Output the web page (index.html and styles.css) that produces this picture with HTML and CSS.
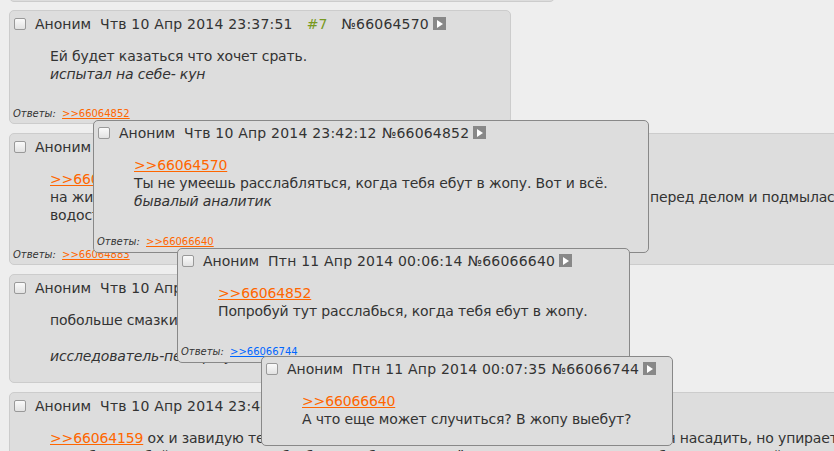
FILE: index.html
```html
<!DOCTYPE html>
<html lang="ru">
<head>
    <meta charset="UTF-8">
    <title>Тред</title>
    <link rel="stylesheet" href="styles.css">
</head>
<body>
    <div class="thread">
        <div class="post post-prev"></div>

        <div class="post post-narrow">
            <div class="post-head">
                <span class="check"></span>
                <span class="name">Аноним</span>
                <span class="date">Чтв 10 Апр 2014 23:37:51</span>
                <span class="num">#7</span>
                <span class="postnum">№66064570</span>
                <span class="play"></span>
            </div>
            <blockquote class="post-body">
                Ей будет казаться что хочет срать.<br>
                <em>испытал на себе- кун</em>
            </blockquote>
            <div class="replies">Ответы: <a href="#">&gt;&gt;66064852</a></div>
        </div>

        <div class="post post-wide">
            <div class="post-head">
                <span class="check"></span>
                <span class="name">Аноним</span>
                <span class="date">Чтв 10 Апр 2014 23:40:05</span>
                <span class="postnum">№66064711</span>
                <span class="play"></span>
            </div>
            <blockquote class="post-body">
                <a href="#">&gt;&gt;66064570</a><br>
                на животе лежать, расслабиться и не дёргаться, а главное чтоб она всё сделала перед делом и подмылась как следует, а то потом будет неловко<br>
                водосточную трубу ещё прочистить, на всякий случай
            </blockquote>
            <div class="replies">Ответы: <a href="#">&gt;&gt;66064883</a></div>
        </div>

        <div class="post post-narrow">
            <div class="post-head">
                <span class="check"></span>
                <span class="name">Аноним</span>
                <span class="date">Чтв 10 Апр 2014 23:41:33</span>
                <span class="postnum">№66064790</span>
                <span class="play"></span>
            </div>
            <blockquote class="post-body">
                побольше смазки и не торопиться<br>
                <br>
                <em>исследователь-пещер-кун</em>
            </blockquote>
        </div>

        <div class="post post-wide">
            <div class="post-head">
                <span class="check"></span>
                <span class="name">Аноним</span>
                <span class="date">Чтв 10 Апр 2014 23:44:18</span>
                <span class="postnum">№66064901</span>
                <span class="play"></span>
            </div>
            <blockquote class="post-body">
                <a href="#">&gt;&gt;66064159</a> ох и завидую тебе, анончик, я бы тоже хотел её так вот взять и на член насадить, но упирается всё в то, что тянки нет<br>
                а вообще не бойся, главное чтобы было не больно, и всё у вас получится, удачи тебе, анон, и твоей тянке
            </blockquote>
        </div>
    </div>

    <!-- превью постов при наведении на ссылки -->
    <div class="post preview preview-a">
        <div class="post-head">
            <span class="check"></span>
            <span class="name">Аноним</span>
            <span class="date">Чтв 10 Апр 2014 23:42:12</span>
            <span class="postnum">№66064852</span>
            <span class="play"></span>
        </div>
        <blockquote class="post-body">
            <a href="#">&gt;&gt;66064570</a><br>
            Ты не умеешь расслабляться, когда тебя ебут в жопу. Вот и всё.<br>
            <em>бывалый аналитик</em>
        </blockquote>
        <div class="replies">Ответы: <a href="#">&gt;&gt;66066640</a></div>
    </div>

    <div class="post preview preview-b">
        <div class="post-head">
            <span class="check"></span>
            <span class="name">Аноним</span>
            <span class="date">Птн 11 Апр 2014 00:06:14</span>
            <span class="postnum">№66066640</span>
            <span class="play"></span>
        </div>
        <blockquote class="post-body">
            <a href="#">&gt;&gt;66064852</a><br>
            Попробуй тут расслабься, когда тебя ебут в жопу.
        </blockquote>
        <div class="replies">Ответы: <a href="#" class="hover">&gt;&gt;66066744</a></div>
    </div>

    <div class="post preview preview-c">
        <div class="post-head">
            <span class="check"></span>
            <span class="name">Аноним</span>
            <span class="date">Птн 11 Апр 2014 00:07:35</span>
            <span class="postnum">№66066744</span>
            <span class="play"></span>
        </div>
        <blockquote class="post-body">
            <a href="#">&gt;&gt;66066640</a><br>
            А что еще может случиться? В жопу выебут?
        </blockquote>
    </div>
</body>
</html>
```

FILE: styles.css
```css
body {
    font-family: "DejaVu Sans", Verdana, sans-serif;
    font-size: 14px;
    color: #333;
    background-color: #eee;
    margin: 0;
    padding: 0;
    overflow: hidden;
}
a {
    color: #ff6600;
}
.thread {
    padding-left: 9px;
}
.post {
    display: table;
    background-color: #ddd;
    border: 1px solid #ccc;
    border-radius: 5px;
    margin-bottom: 9px;
    padding: 3px 2px 0 2px;
}
.post-prev {
    width: 540px;
    height: 39px;
    margin-top: -42px;
    margin-bottom: 8px;
}
.post-narrow {
    width: 496px;
}
.post-wide {
    width: 1400px;
}
.post-head {
    display: flex;
    align-items: center;
    height: 19px;
    white-space: nowrap;
}
.check {
    width: 10px;
    height: 10px;
    border: 1px solid #999;
    border-radius: 2px;
    background: linear-gradient(#fafafa, #e2e2e2);
    margin: 0 9px 0 2px;
}
.name {
    margin-right: 9px;
}
.date, .postnum {
    letter-spacing: 0.2px;
}
.num {
    color: #789922;
    margin: 0 9px 0 14px;
}
.postnum {
    margin-left: 5px;
}
.play {
    width: 13px;
    height: 13px;
    margin-left: 4px;
    background-color: #888;
    position: relative;
}
.play::after {
    content: "";
    position: absolute;
    left: 4px;
    top: 3px;
    border-left: 6px solid #fff;
    border-top: 4px solid transparent;
    border-bottom: 4px solid transparent;
}
.post-body {
    margin: 14px 39px 17px 38px;
    line-height: 18px;
    letter-spacing: -0.15px;
    white-space: nowrap;
}
.replies {
    font-size: 10px;
    font-style: italic;
    line-height: 12px;
    padding: 8px 0 3px 1px;
}
.replies a {
    font-style: normal;
    margin-left: 3px;
}
.replies a.hover {
    color: #0066ff;
}
.preview {
    position: absolute;
    border-color: #888;
    margin: 0;
    padding-top: 2px;
}
.preview .replies {
    padding-top: 9px;
    padding-bottom: 4px;
}
.preview-a {
    left: 93px;
    top: 120px;
}
.preview-b {
    left: 177px;
    top: 248px;
}
.preview-c {
    left: 261px;
    top: 356px;
}
```
